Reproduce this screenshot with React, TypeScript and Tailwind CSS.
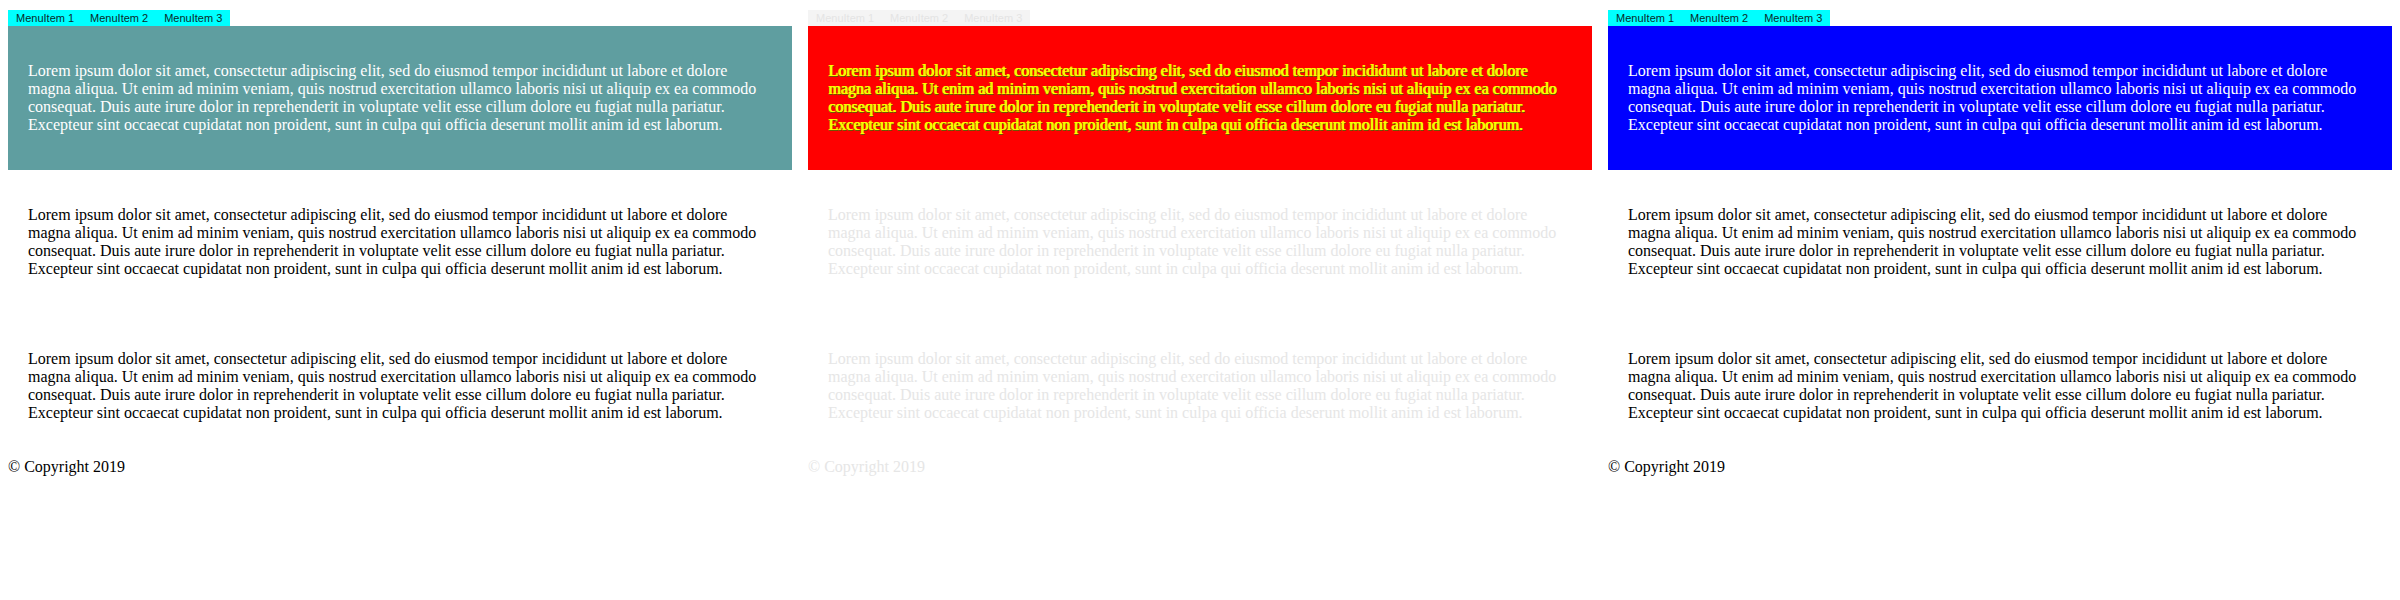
const lorem =
  "Lorem ipsum dolor sit amet, consectetur adipiscing elit, sed do eiusmod tempor incididunt ut labore et dolore magna aliqua. Ut enim ad minim veniam, quis nostrud exercitation ullamco laboris nisi ut aliquip ex ea commodo consequat. Duis aute irure dolor in reprehenderit in voluptate velit esse cillum dolore eu fugiat nulla pariatur. Excepteur sint occaecat cupidatat non proident, sunt in culpa qui officia deserunt mollit anim id est laborum.";

type Theme = {
  menu: string;
  menuText: string;
  header: string;
  headerText: string;
  body: string;
};

const themes: Theme[] = [
  {
    menu: "bg-[#00ffff]",
    menuText: "text-[#0a2a2a]",
    header: "bg-[#5f9ea0]",
    headerText: "text-white",
    body: "text-black",
  },
  {
    menu: "bg-[#f4f4f4]",
    menuText: "text-[#e4e4e4]",
    header: "bg-[#ff0000]",
    headerText:
      "text-[#ffff00] [text-shadow:1px_0_0_#ffff00,0_1px_0_#6b5a00,1px_1px_0_#6b5a00]",
    body: "text-[#e6e6e6]",
  },
  {
    menu: "bg-[#00ffff]",
    menuText: "text-[#0a2a2a]",
    header: "bg-[#0000ff]",
    headerText: "text-white",
    body: "text-black",
  },
];

function Column({ t }: { t: Theme }) {
  return (
    <div className="px-2 pt-[10px] font-['Liberation_Serif',serif] text-[16px] leading-[18px]">
      {/* menu */}
      <nav className={`flex w-fit h-4 ${t.menu}`}>
        {["MenuItem 1", "MenuItem 2", "MenuItem 3"].map((m) => (
          <span
            key={m}
            className={`px-2 text-[11px] leading-4 font-['Liberation_Sans',Arial,sans-serif] ${t.menuText}`}
          >
            {m}
          </span>
        ))}
      </nav>

      <header className={`px-5 py-9 ${t.header}`}>
        <p className={t.headerText}>{lorem}</p>
      </header>

      <section className="px-5 py-9">
        <p className={t.body}>{lorem}</p>
      </section>
      <section className="px-5 py-9">
        <p className={t.body}>{lorem}</p>
      </section>

      <footer className={t.body}>© Copyright 2019</footer>
    </div>
  );
}

export default function App() {
  return (
    <div className="grid grid-cols-3 w-[2400px] h-[600px] bg-white">
      {themes.map((t, i) => (
        <Column key={i} t={t} />
      ))}
    </div>
  );
}
